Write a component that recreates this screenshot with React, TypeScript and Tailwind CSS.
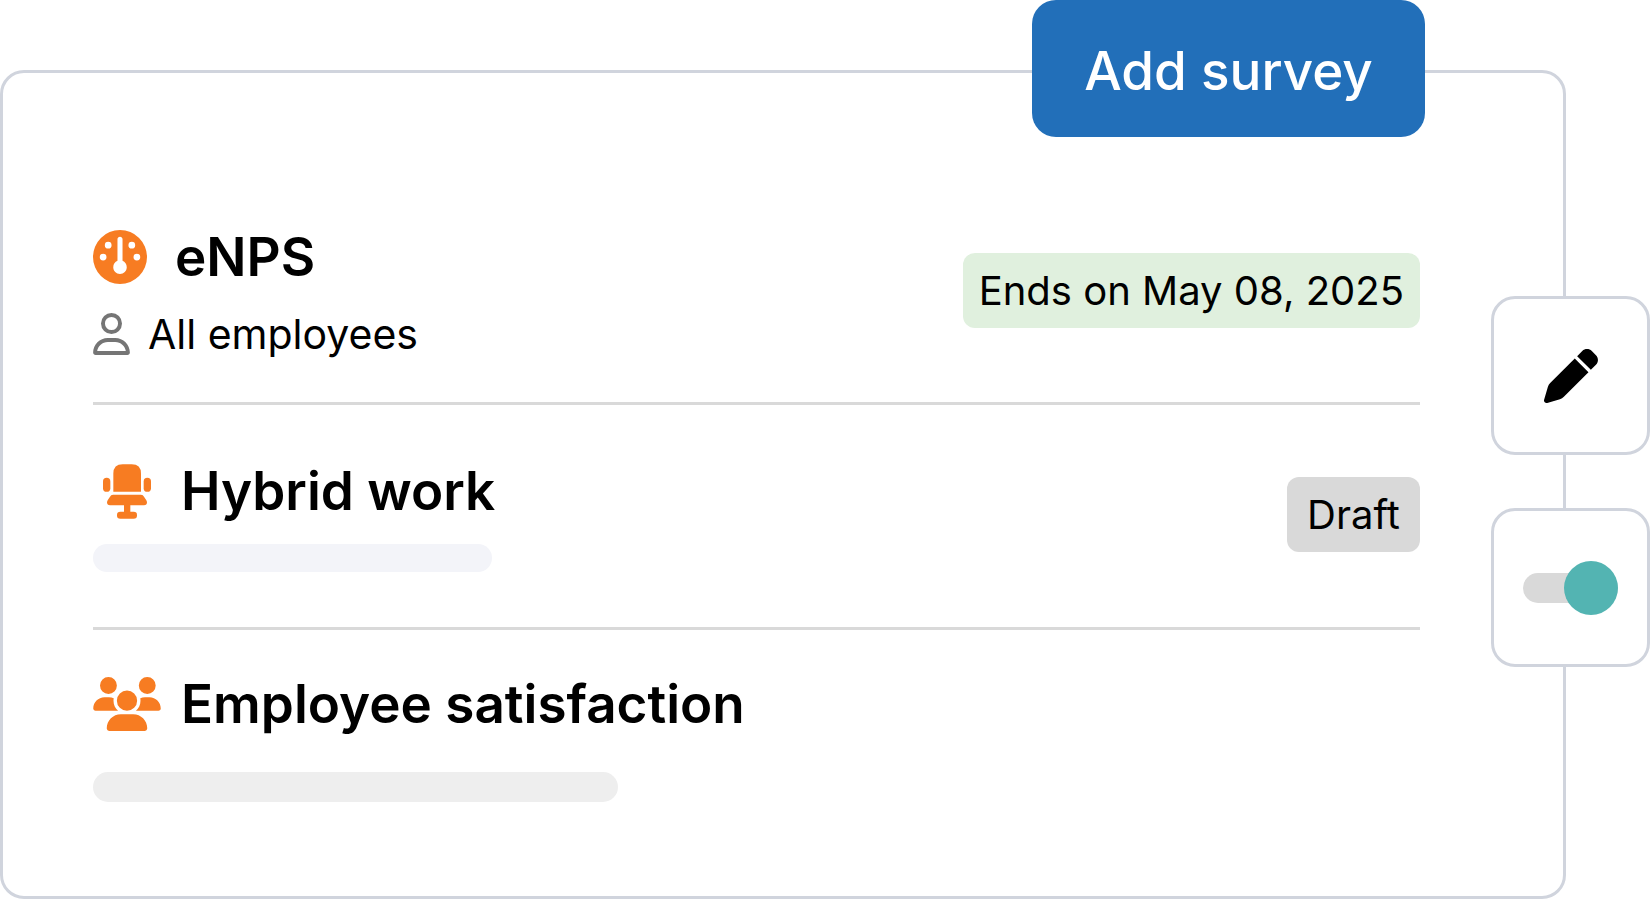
import type { ReactNode } from "react";
import { FaGauge, FaPen, FaRegUser, FaUsers } from "react-icons/fa6";

function OfficeChairIcon() {
  return (
    <svg viewBox="0 0 144 164" className="h-[55px] w-12" fill="currentColor" aria-hidden="true">
      <path d="M31 83V28Q31 0 59 0h27q28 0 28 28v55z" />
      <rect x="0" y="41" width="22" height="42" rx="11" />
      <rect x="122" y="41" width="22" height="42" rx="11" />
      <path d="M30 92h84q6 0 10 7l6 9q2 4 2 6 0 9-9 9H21q-9 0-9-9 0-2 2-6l6-9q4-7 10-7z" />
      <path d="M63 120h19v24H63z" />
      <rect x="42" y="143" width="60" height="21" rx="10" />
    </svg>
  );
}

interface SurveyRowProps {
  icon: ReactNode;
  title: string;
  children: ReactNode;
  badge?: ReactNode;
  className: string;
}

function SurveyRow({ icon, title, children, badge, className }: SurveyRowProps) {
  return (
    <li className={`flex items-center justify-between ${className}`}>
      <div>
        <h2 className="flex items-center text-[53px] leading-[60px] font-semibold">
          <span className="text-[#f77c22]">{icon}</span>
          {title}
        </h2>
        {children}
      </div>
      {badge}
    </li>
  );
}

const TILE = "flex size-[159px] items-center justify-center rounded-3xl border-3 border-[#d0d4dd] bg-white";
const BADGE = "mb-1 flex h-[75px] min-w-[133px] items-center justify-center rounded-xl px-4 text-[40px] leading-[48px]";

export default function App() {
  return (
    <main className="relative bg-white pt-[70px] pr-[84px] font-['Inter',sans-serif] text-black">
      <section className="rounded-3xl border-3 border-[#d0d4dd] pt-[154px] pr-[143px] pb-[94px] pl-[90px]">
        <ul className="divide-y-3 divide-[#d9d9d9]">
          <SurveyRow
            className="pb-11"
            icon={<FaGauge className="mr-7 size-[54px]" />}
            title="eNPS"
            badge={<span className={`${BADGE} bg-[#e0f0de]`}>Ends on May 08, 2025</span>}
          >
            <p className="mt-[23px] flex items-center gap-[18px] text-[41px] leading-[48px]">
              <FaRegUser className="h-[42px] w-[37px] text-[#757575]" />
              All employees
            </p>
          </SurveyRow>
          <SurveyRow
            className="pt-14 pb-[55px]"
            icon={<span className="mr-5 flex w-[68px] justify-center"><OfficeChairIcon /></span>}
            title="Hybrid work"
            badge={<span className={`${BADGE} bg-[#d9d9d9]`}>Draft</span>}
          >
            <div className="mt-[23px] h-7 w-[399px] rounded-full bg-[#f3f4f9]" />
          </SurveyRow>
          <SurveyRow
            className="pt-11"
            icon={<FaUsers className="mr-5 h-[54px] w-[68px]" />}
            title="Employee satisfaction"
          >
            <div className="mt-[38px] h-[30px] w-[525px] rounded-full bg-[#eeeeee]" />
          </SurveyRow>
        </ul>
      </section>

      <button
        type="button"
        className="absolute top-0 right-[225px] h-[137px] w-[393px] rounded-3xl bg-[#226fb9] pt-1 text-[53px] leading-[60px] font-medium text-white"
      >
        Add survey
      </button>

      <div className="absolute top-[296px] right-0 flex flex-col gap-[53px]">
        <button type="button" aria-label="Edit survey" className={TILE}>
          <FaPen className="size-[54px]" />
        </button>
        <label className={TILE}>
          <input type="checkbox" role="switch" aria-label="Survey active" defaultChecked className="peer sr-only" />
          <span className="flex h-[30px] w-[95px] items-center justify-start rounded-full bg-[#d9d9d9] peer-checked:justify-end">
            <span className="size-[54px] rounded-full bg-[#53b4b2]" />
          </span>
        </label>
      </div>
    </main>
  );
}
